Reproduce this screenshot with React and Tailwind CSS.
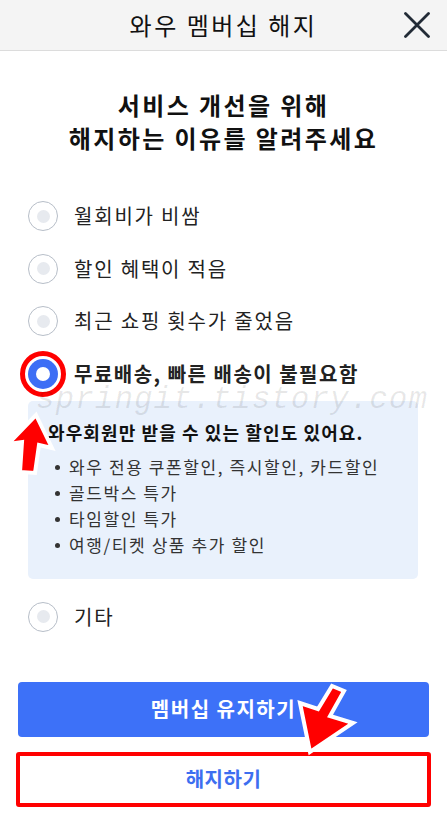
import React from 'react';

const reasons = ['월회비가 비쌈', '할인 혜택이 적음', '최근 쇼핑 횟수가 줄었음'];
const perks = ['와우 전용 쿠폰할인, 즉시할인, 카드할인', '골드박스 특가', '타임할인 특가', '여행/티켓 상품 추가 할인'];

const Radio = ({ checked }) =>
  checked ? (
    <div className="relative w-[30px] h-[30px] shrink-0">
      <div className="w-[30px] h-[30px] rounded-full bg-[#3d6ef5] flex items-center justify-center">
        <div className="w-[14px] h-[14px] rounded-full bg-white" />
      </div>
      {/* annotation ring */}
      <div className="absolute -inset-[8px] rounded-full border-[5px] border-[#ff0000]" />
    </div>
  ) : (
    <div className="w-[30px] h-[30px] shrink-0 rounded-full border-[1.5px] border-[#b7bec8] bg-white flex items-center justify-center">
      <div className="w-[13px] h-[13px] rounded-full bg-[#e7eaef]" />
    </div>
  );

const Option = ({ label, checked }) => (
  <li className="h-[52.5px] flex items-center px-[28px] gap-[16px]">
    <Radio checked={checked} />
    <span className={`text-[20px] text-[#222] ${checked ? 'font-bold tracking-[1.5px]' : 'tracking-[1.8px]'}`}>{label}</span>
  </li>
);

const App = () => {
  return (
    <div className="relative w-[447px] min-h-[820px] bg-white font-['Noto_Sans_CJK_KR',sans-serif] overflow-hidden">
      <header className="h-[51px] bg-[#f4f4f4] border-b border-[#dcdcdc] grid grid-cols-[60px_1fr_60px] items-center">
        <div />
        <h1 className="text-center text-[24px] text-[#111] tracking-[2.5px]">와우 멤버십 해지</h1>
        <button className="flex items-center justify-start pl-[17px]">
          <svg width="26" height="26" viewBox="0 0 26 26">
            <path d="M1.5 1.5 L24.5 24.5 M24.5 1.5 L1.5 24.5" stroke="#222b36" strokeWidth="2.8" strokeLinecap="round" />
          </svg>
        </button>
      </header>

      <h2 className="mt-[37px] text-center text-[24px] font-bold leading-[33px] text-[#111] tracking-[2.4px]">
        서비스 개선을 위해
        <br />
        해지하는 이유를 알려주세요
      </h2>

      <ul className="mt-[36px]">
        {reasons.map((r) => (
          <Option key={r} label={r} />
        ))}
        <Option label="무료배송, 빠른 배송이 불필요함" checked />
      </ul>

      <div className="mt-[1px] mx-[28px] w-[390px] rounded-[5px] bg-[#e9f1fc] pt-[18px] pb-[21px] pl-[20px]">
        <p className="text-[18px] leading-[26px] font-bold text-[#111] tracking-[1.1px]">와우회원만 받을 수 있는 할인도 있어요.</p>
        <ul className="mt-[9px] pl-[7px]">
          {perks.map((p) => (
            <li key={p} className="flex items-center gap-[9px] text-[17px] leading-[26px] text-[#333] tracking-[1.6px]">
              <span className="w-[5px] h-[5px] rounded-full bg-[#333]" />
              {p}
            </li>
          ))}
        </ul>
      </div>

      <ul className="mt-[11.5px]">
        <Option label="기타" />
      </ul>

      <div className="mt-[38.5px] px-[18px] flex flex-col gap-[15px]">
        <button className="h-[55px] rounded-[4px] bg-[#3d71f8] text-white text-[20px] font-bold tracking-[1.5px]">멤버십 유지하기</button>
        <button className="h-[55px] rounded-[3px] bg-white border-[4px] border-[#ff0000] -mx-[2px] text-[#3d6ef0] text-[20px] font-bold tracking-[0.5px]">
          해지하기
        </button>
      </div>

      {/* watermark */}
      <div className="absolute left-[36px] top-[377px] text-[31px] italic text-black/[0.09] font-['Liberation_Mono',monospace] tracking-[1px] pointer-events-none">
        springit.tistory.com
      </div>

      {/* annotation arrows */}
      <svg className="absolute left-0 top-0 pointer-events-none" width="447" height="820" viewBox="0 0 447 820">
        <polygon
          points="36,415 52,448 39,445 35,473 20,472 22,442 8,444"
          fill="#ff0000"
          stroke="#ffffff"
          strokeWidth="4"
          strokeLinejoin="miter"
        />
        <polygon
          points="310,752 300,703 318,709 332,686 344,691 330,716 353,723"
          fill="#ff0000"
          stroke="#ffffff"
          strokeWidth="4"
          strokeLinejoin="miter"
        />
      </svg>
    </div>
  );
};

export default App;
